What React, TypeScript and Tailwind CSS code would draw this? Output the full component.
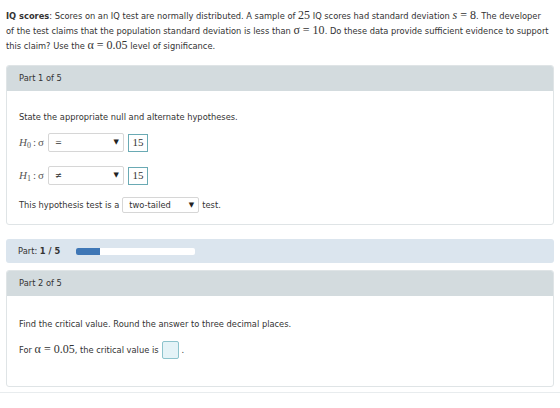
const sans = "font-['DejaVu_Sans',Verdana,sans-serif]";
const serif = "font-['Liberation_Serif','Times_New_Roman',serif]";

function M({ children }: { children: React.ReactNode }) {
  return <span className={`${serif} text-[12px] leading-[10px]`}>{children}</span>;
}

function Select({ value, width }: { value: string; width: string }) {
  return (
    <div className={`flex items-center justify-between border border-[#d6d6d6] bg-white rounded-[2px] pl-[6px] pr-[4px] ${width}`}>
      <span>{value}</span>
      <span className="text-[7px] text-[#222]">▼</span>
    </div>
  );
}

function Answer({ value }: { value: string }) {
  return (
    <div className={`flex items-center justify-center border border-[#6aaab4] w-[20px] h-[18px] ${serif} text-[11px]`}>
      {value}
    </div>
  );
}

function Hyp({ sub, op }: { sub: string; op: string }) {
  return (
    <div className="flex items-center h-[19px]">
      <span className={`${serif} text-[11px] text-[#555] w-[29px]`}>
        <i>H</i>
        <sub className="text-[8px]">{sub}</sub>
        <span className="ml-[2px]">:</span>
        <span className="ml-[2px]">σ</span>
      </span>
      <Select value={op} width="w-[76px] h-[19px]" />
      <div className="ml-[4px]">
        <Answer value="15" />
      </div>
    </div>
  );
}

function CardHeader({ title }: { title: string }) {
  return <div className="h-[25px] bg-[#d3dbde] flex items-center px-[12px]">{title}</div>;
}

export default function App() {
  return (
    <div className={`${sans} text-[8.3px] text-[#333] bg-white w-[560px] h-[408px]`}>
      <div className="px-[6px] pb-[5px] border-b border-[#e8ecee]">
        <p className="pt-[9px] leading-[15px]">
          <b>IQ scores</b>: Scores on an IQ test are normally distributed. A sample of <M>25</M> IQ scores had standard deviation <M><i>s</i> = 8</M>. The developer
          <br />
          of the test claims that the population standard deviation is less than <M>σ = 10</M>. Do these data provide sufficient evidence to support this claim? Use the <M>α = 0.05</M> level of significance.
        </p>

        <div className="mt-[11px] border border-[#dfe4e6] rounded-[3px] overflow-hidden">
          <CardHeader title="Part 1 of 5" />
          <div className="px-[12px] pt-[21px] pb-[11px]">
            <p className="leading-[10px]">State the appropriate null and alternate hypotheses.</p>
            <div className="mt-[11px] flex flex-col gap-[14px]">
              <Hyp sub="0" op="=" />
              <Hyp sub="1" op="≠" />
            </div>
            <div className="mt-[12px] flex items-center gap-[3px]">
              <span>This hypothesis test is a</span>
              <Select value="two-tailed" width="w-[77px] h-[16px]" />
              <span>test.</span>
            </div>
          </div>
        </div>

        <div className="mt-[14px] h-[24px] bg-[#dbe5ee] rounded-[3px] flex items-center px-[12px]">
          <span className="w-[58px]">
            Part: <b>1 / 5</b>
          </span>
          <div className="w-[119px] h-[7px] bg-white rounded-[2px] overflow-hidden">
            <div className="w-[24px] h-full bg-[#3f77b6]" />
          </div>
        </div>

        <div className="mt-[7px] border border-[#dfe4e6] rounded-[3px] overflow-hidden h-[117px]">
          <CardHeader title="Part 2 of 5" />
          <div className="px-[12px] pt-[23px]">
            <p className="leading-[10px]">Find the critical value. Round the answer to three decimal places.</p>
            <div className="mt-[12px] flex items-center gap-[3px]">
              <span>
                For <M>α = 0.05</M>, the critical value is
              </span>
              <div className="w-[17px] h-[18px] border border-[#8cc3cc] bg-[#e4f3f7] rounded-[2px]" />
              <span>.</span>
            </div>
          </div>
        </div>
      </div>
    </div>
  );
}
